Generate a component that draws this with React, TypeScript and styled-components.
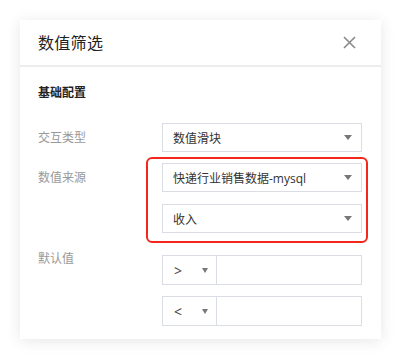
import React from "react";
import styled, { createGlobalStyle } from "styled-components";

const GlobalStyle = createGlobalStyle`
  html, body {
    margin: 0;
    padding: 0;
    background: #ffffff;
    font-family: "Open Sans", "Noto Sans CJK SC", sans-serif;
  }
`;

const Page = styled.div`
  padding: 20px;
  width: 401px;
  height: 360px;
  box-sizing: border-box;
`;

const Card = styled.div`
  width: 361px;
  background: #fff;
  box-shadow: 0 2px 14px rgba(0, 0, 0, 0.1);
`;

const Header = styled.div`
  height: 45px;
  display: flex;
  align-items: center;
  justify-content: space-between;
  padding: 0 25px 0 18px;
  border-bottom: 2px solid #ececec;
`;

const Title = styled.div`
  font-size: 16px;
  color: #222;
  letter-spacing: 0.3px;
  margin-top: -2px;
`;

const CloseButton = styled.button`
  border: 0;
  background: none;
  padding: 0;
  width: 13px;
  height: 13px;
  display: flex;
  cursor: pointer;
`;

const Body = styled.div`
  padding: 16px 19px 13px 18px;
`;

const SectionTitle = styled.div`
  font-size: 12px;
  font-weight: 700;
  color: #222;
  line-height: 20px;
  margin-bottom: 20px;
`;

const Row = styled.div<{ $gap?: number }>`
  display: grid;
  grid-template-columns: 124px 200px;
  margin-top: ${(p) => p.$gap ?? 0}px;
`;

const Label = styled.div<{ $top?: boolean }>`
  font-size: 12px;
  color: #999;
  line-height: ${(p) => (p.$top ? "20px" : "29px")};
  margin-top: ${(p) => (p.$top ? "-6px" : "0")};
`;

const Controls = styled.div`
  display: flex;
  flex-direction: column;
  gap: 11px;
`;

// red annotation frame drawn over the data-source selects
const Highlight = styled.div`
  position: relative;
  display: flex;
  flex-direction: column;
  gap: 12px;
  &::before {
    content: "";
    position: absolute;
    left: -16px;
    right: -6px;
    top: -6px;
    bottom: -10px;
    border: 2px solid #f5261b;
    border-radius: 6px;
    pointer-events: none;
  }
`;

const Select = styled.div`
  height: 29px;
  box-sizing: border-box;
  border: 1px solid #dadde3;
  display: flex;
  align-items: center;
  justify-content: space-between;
  padding: 0 9px 0 10px;
  font-size: 12px;
  color: #333;
`;

const Caret = styled.span<{ $small?: boolean }>`
  width: 0;
  height: 0;
  border-left: ${(p) => (p.$small ? 3.5 : 4)}px solid transparent;
  border-right: ${(p) => (p.$small ? 3.5 : 4)}px solid transparent;
  border-top: 5px solid #777;
`;

const Compare = styled.div`
  height: 30px;
  box-sizing: border-box;
  border: 1px solid #dadde3;
  display: grid;
  grid-template-columns: 54px 1fr;
`;

const OpSelect = styled.div`
  border-right: 1px solid #dadde3;
  display: flex;
  align-items: center;
  justify-content: space-between;
  padding: 0 8px 0 11px;
  font-size: 14px;
  color: #444;
`;

const ValueInput = styled.input`
  border: 0;
  outline: none;
  min-width: 0;
  padding: 0 8px;
  font-size: 12px;
`;

const CloseIcon = () => (
  <svg width="13" height="13" viewBox="0 0 13 13">
    <path d="M1 1L12 12M12 1L1 12" stroke="#888" strokeWidth="1.6" />
  </svg>
);

const ops = [">", "<"];

export default function App() {
  return (
    <>
      <GlobalStyle />
      <Page>
        <Card>
          <Header>
            <Title>数值筛选</Title>
            <CloseButton aria-label="关闭">
              <CloseIcon />
            </CloseButton>
          </Header>
          <Body>
            <SectionTitle>基础配置</SectionTitle>
            <Row>
              <Label>交互类型</Label>
              <Select>
                数值滑块
                <Caret />
              </Select>
            </Row>
            <Row $gap={11}>
              <Label>数值来源</Label>
              <Highlight>
                <Select>
                  快递行业销售数据-mysql
                  <Caret />
                </Select>
                <Select>
                  收入
                  <Caret />
                </Select>
              </Highlight>
            </Row>
            <Row $gap={22}>
              <Label $top>默认值</Label>
              <Controls>
                {ops.map((op) => (
                  <Compare key={op}>
                    <OpSelect>
                      {op}
                      <Caret $small />
                    </OpSelect>
                    <ValueInput />
                  </Compare>
                ))}
              </Controls>
            </Row>
          </Body>
        </Card>
      </Page>
    </>
  );
}
